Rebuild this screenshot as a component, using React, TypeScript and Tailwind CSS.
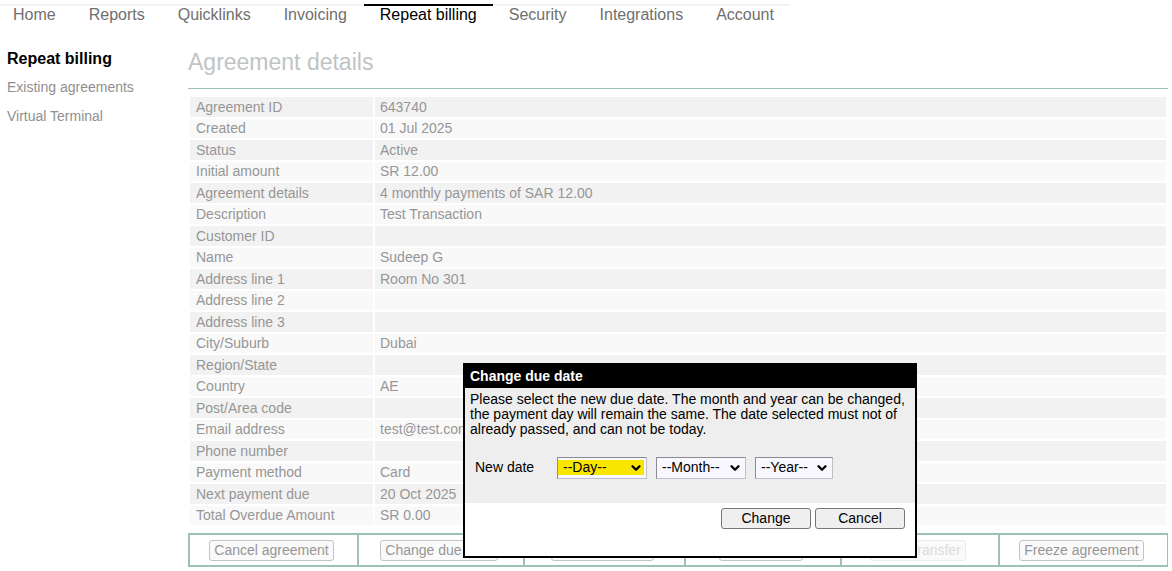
import { ChevronDown } from 'lucide-react';

const tabs = ['Home', 'Reports', 'Quicklinks', 'Invoicing', 'Repeat billing', 'Security', 'Integrations', 'Account'];

const details: [string, string][] = [
  ['Agreement ID', '643740'],
  ['Created', '01 Jul 2025'],
  ['Status', 'Active'],
  ['Initial amount', 'SR 12.00'],
  ['Agreement details', '4 monthly payments of SAR 12.00'],
  ['Description', 'Test Transaction'],
  ['Customer ID', ''],
  ['Name', 'Sudeep G'],
  ['Address line 1', 'Room No 301'],
  ['Address line 2', ''],
  ['Address line 3', ''],
  ['City/Suburb', 'Dubai'],
  ['Region/State', ''],
  ['Country', 'AE'],
  ['Post/Area code', ''],
  ['Email address', 'test@test.com'],
  ['Phone number', ''],
  ['Payment method', 'Card'],
  ['Next payment due', '20 Oct 2025'],
  ['Total Overdue Amount', 'SR 0.00'],
];

const actions = [
  { label: 'Cancel agreement', disabled: false },
  { label: 'Change due date', disabled: false },
  { label: 'Change details', disabled: false },
  { label: 'Edit amount', disabled: false },
  { label: 'Card Transfer', disabled: true },
  { label: 'Freeze agreement', disabled: false },
];

function DateSelect({ label, className, highlighted }: { label: string; className: string; highlighted?: boolean }) {
  return (
    <div className={`relative h-[22px] ${className}`}>
      <select
        aria-label={label}
        className={`h-full w-full appearance-none border border-t-[#8b8b93] border-l-[#8b8b93] border-r-[#bfbfc8] border-b-[#bfbfc8] bg-[#f7f7fd] pb-0.5 pl-[5px] leading-[18px] outline-none ${
          highlighted
            ? 'bg-[linear-gradient(#f8e600,#f8e600)] bg-[length:calc(100%_-_2px)_15px] bg-[position:0_2px] bg-no-repeat'
            : ''
        }`}
      >
        <option>{`--${label}--`}</option>
      </select>
      <ChevronDown className="pointer-events-none absolute top-1 right-1 size-[14px]" strokeWidth={4} />
    </div>
  );
}

function ChangeDueDateDialog() {
  return (
    <div
      role="dialog"
      aria-labelledby="dialog-title"
      className="absolute top-[363px] left-[463px] w-[454px] border-2 border-black bg-white text-[14px] text-black"
    >
      <h2 id="dialog-title" className="h-[23px] bg-black pl-[5px] font-bold leading-[22px] text-white">
        Change due date
      </h2>
      <div className="h-[115px] bg-[#eee] px-[5px] pt-1">
        <p className="leading-[15px]">
          Please select the new due date. The month and year can be changed, the payment day will remain the same. The
          date selected must not of already passed, and can not be today.
        </p>
        <div className="mt-5 flex pl-[5px]">
          <span className="w-[82px] leading-5">New date</span>
          <div className="flex gap-[9px]">
            <DateSelect label="Day" className="w-[90px]" highlighted />
            <DateSelect label="Month" className="w-[90px]" />
            <DateSelect label="Year" className="w-[78px]" />
          </div>
        </div>
      </div>
      <div className="flex h-[53px] justify-end gap-1 pt-[5px] pr-[10px]">
        <button className="h-[21px] w-[90px] rounded-[3px] border border-[#767676] bg-[#efefef] pb-px leading-[18px]">
          Change
        </button>
        <button className="h-[21px] w-[90px] rounded-[3px] border border-[#767676] bg-[#efefef] pb-px leading-[18px]">
          Cancel
        </button>
      </div>
    </div>
  );
}

export default function App() {
  return (
    <div className="relative bg-white pt-1 font-['Liberation_Sans',Arial,sans-serif] text-[14px]">
      <nav className="flex w-fit border-t-2 border-[#f3f3f3] text-[16px] leading-[18px] whitespace-nowrap text-[#6f6f6f]">
        {tabs.map((tab) => (
          <a
            key={tab}
            href="#"
            className={
              tab === 'Repeat billing'
                ? '-mt-0.5 border-t-2 border-black px-4 text-black'
                : 'mr-px px-4 first:pl-[13px] last:mr-0'
            }
          >
            {tab}
          </a>
        ))}
      </nav>
      <div className="flex pt-6 pr-1">
        <aside className="w-[188px] shrink-0 pl-[7px]">
          <h2 className="h-5 text-[16px] font-bold leading-[22px] text-black">Repeat billing</h2>
          <ul className="text-[#8f8f8f]">
            <li className="mt-2.5 leading-[19px]">
              <a href="#">Existing agreements</a>
            </li>
            <li className="mt-2.5 leading-[19px]">
              <a href="#">Virtual Terminal</a>
            </li>
          </ul>
        </aside>
        <main className="min-w-0 flex-1 text-[#969696]">
          <h1 className="h-[41px] border-b border-[#9bc2b5] text-[23px] leading-7 text-[#c0c4c4]">Agreement details</h1>
          <table className="mt-1.5 w-full table-fixed border-separate border-spacing-x-0.5 border-spacing-y-0">
            <colgroup>
              <col className="w-[183px]" />
              <col />
            </colgroup>
            <tbody>
              {details.map(([name, value]) => (
                <tr key={name} className="group">
                  <th
                    scope="row"
                    className="h-[21px] border-t-2 border-white bg-[#f9f9f9] p-0 pl-1.5 text-left font-normal leading-[19px] group-odd:h-[22px] group-odd:bg-[#f2f2f2]"
                  >
                    {name}
                  </th>
                  <td className="border-t-2 border-white bg-[#f9f9f9] p-0 pl-[5px] leading-[19px] group-odd:bg-[#f2f2f2]">
                    {value}
                  </td>
                </tr>
              ))}
            </tbody>
          </table>
          <div className="mt-2 grid h-[34px] grid-cols-[169fr_166fr_161fr_156fr_158fr_168fr] border-y-2 border-l-2 border-[#9bc2b5]">
            {actions.map(({ label, disabled }) => (
              <div
                key={label}
                className="flex items-start justify-center border-r-2 border-[#9bc2b5] pt-[5px] pr-1 last:border-r"
              >
                <button
                  disabled={disabled}
                  className="h-[21px] rounded-[3px] border border-[#c4c4c4] bg-[#fafafa] px-1 pb-px leading-[18px] whitespace-nowrap disabled:border-[#ececec] disabled:text-[#dcdcdc]"
                >
                  {label}
                </button>
              </div>
            ))}
          </div>
        </main>
      </div>
      <ChangeDueDateDialog />
    </div>
  );
}
